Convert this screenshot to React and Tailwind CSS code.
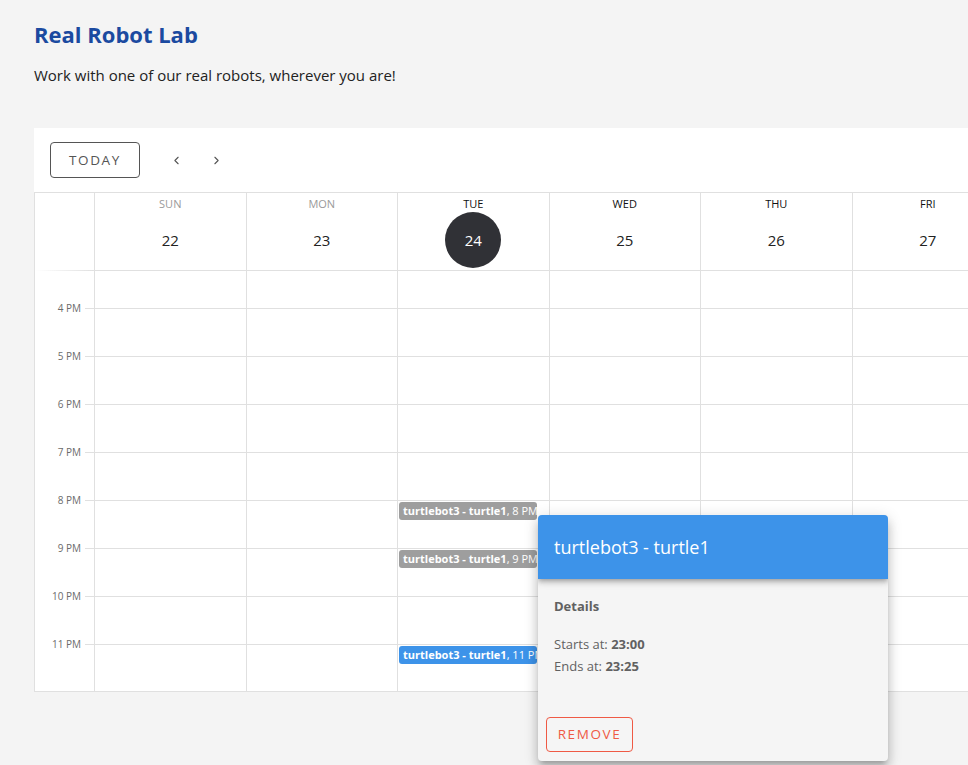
import React from "react";
import { ChevronLeft, ChevronRight } from "lucide-react";

const days = [
  { name: "SUN", date: 22, past: true },
  { name: "MON", date: 23, past: true },
  { name: "TUE", date: 24, today: true },
  { name: "WED", date: 25 },
  { name: "THU", date: 26 },
  { name: "FRI", date: 27 },
  { name: "SAT", date: 28 },
];

const hours = ["4 PM", "5 PM", "6 PM", "7 PM", "8 PM", "9 PM", "10 PM", "11 PM"];

const events = {
  "8 PM": { color: "bg-[#9e9e9e]", label: "8 PM - 8:25 PM" },
  "9 PM": { color: "bg-[#9e9e9e]", label: "9 PM - 9:25 PM" },
  "11 PM": { color: "bg-[#3d93e9]", label: "11 PM - 11:25 PM" },
};

const gridCols = "grid grid-cols-[59px_repeat(7,151.5px)]";

function Event({ ev }) {
  return (
    <div
      className={`${ev.color} mt-[1px] ml-[1px] mr-[12px] h-[18px] rounded-[3px] px-[4px] text-[11px] leading-[18px] text-white whitespace-nowrap overflow-hidden`}
    >
      <span className="font-bold">turtlebot3 - turtle1</span>, {ev.label}
    </div>
  );
}

export default function App() {
  return (
    <div
      className="relative w-[968px] h-[765px] overflow-hidden bg-[#f4f4f4] text-[#222]"
      style={{ fontFamily: '"Open Sans", "Liberation Sans", sans-serif' }}
    >
      <div className="pl-[34px] pt-[20px]">
        <h1 className="text-[22px] leading-[28px] font-bold text-[#1b4aa0]">Real Robot Lab</h1>
        <p className="mt-[17px] text-[15px] leading-[20px] text-[#222]">
          Work with one of our real robots, wherever you are!
        </p>

        <div className="mt-[43px] w-[1122px] bg-white">
          <div className="flex h-[64px] items-center pl-[16px]">
            <button className="h-[36px] w-[90px] rounded-[4px] border border-[#555] text-[13.5px] tracking-[1.6px] text-[#555]">
              TODAY
            </button>
            <div className="ml-[18px] flex items-center">
              <span className="flex h-[36px] w-[36px] items-center justify-center text-[#555]">
                <ChevronLeft size={13} strokeWidth={2} />
              </span>
              <span className="ml-[4px] flex h-[36px] w-[36px] items-center justify-center text-[#555]">
                <ChevronRight size={13} strokeWidth={2} />
              </span>
            </div>
          </div>

          <div className="border-l border-t border-b border-[#e0e0e0]">
            {/* header */}
            <div className={`${gridCols} h-[78px]`}>
              <div className="flex flex-col justify-end">
                <div className="h-[1px] bg-gradient-to-r from-white to-[#e0e0e0]" />
              </div>
              {days.map((d) => (
                <div
                  key={d.name}
                  className="flex flex-col items-center border-l border-b border-[#e0e0e0]"
                >
                  <div
                    className={`mt-[3px] text-[11px] leading-[16px] ${d.past ? "text-[#9a9a9a]" : "text-[#111]"}`}
                  >
                    {d.name}
                  </div>
                  <div
                    className={`flex h-[56px] w-[56px] items-center justify-center rounded-full text-[15px] ${
                      d.today ? "bg-[#303136] text-white" : "text-[#222]"
                    }`}
                  >
                    {d.date}
                  </div>
                </div>
              ))}
            </div>

            {/* partial top row */}
            <div className={`${gridCols} h-[37px]`}>
              <div />
              {days.map((d) => (
                <div key={d.name} className="border-l border-[#e0e0e0]" />
              ))}
            </div>

            {hours.map((h, i) => (
              <div key={h} className={`${gridCols} ${i === hours.length - 1 ? "h-[47px]" : "h-[48px]"}`}>
                <div className="relative">
                  <div className="absolute left-[50px] top-0 h-[1px] w-[9px] bg-[#e0e0e0]" />
                  <div className="absolute right-[13px] top-[-8px] text-[10px] leading-[16px] text-[#6b6b6b]">
                    {h}
                  </div>
                </div>
                {days.map((d) => (
                  <div key={d.name} className="border-l border-t border-[#e0e0e0]">
                    {d.today && events[h] ? <Event ev={events[h]} /> : null}
                  </div>
                ))}
              </div>
            ))}
          </div>
        </div>
      </div>

      {/* popup */}
      <div className="absolute left-[538px] top-[515px] w-[350px] h-[246px] overflow-hidden rounded-[4px] bg-[#f5f5f5] shadow-[0_5px_5px_-3px_rgba(0,0,0,0.2),0_8px_10px_1px_rgba(0,0,0,0.14),0_3px_14px_2px_rgba(0,0,0,0.12)] flex flex-col">
        <div className="relative z-10 flex h-[64px] items-center bg-[#3d93e9] px-[16px] shadow-[0_2px_4px_-1px_rgba(0,0,0,0.2),0_4px_5px_0_rgba(0,0,0,0.14),0_1px_10px_0_rgba(0,0,0,0.12)]">
          <div className="text-[18px] text-white">turtlebot3 - turtle1</div>
        </div>
        <div className="flex-1 px-[16px] pt-[16px] text-[13px] leading-[22px] text-[#616161]">
          <div className="font-bold">Details</div>
          <div className="mt-[16px]">
            Starts at: <span className="font-bold">23:00</span>
          </div>
          <div>
            Ends at: <span className="font-bold">23:25</span>
          </div>
        </div>
        <div className="p-[8px] pb-[9px]">
          <button className="h-[35px] w-[87px] rounded-[4px] border border-[#ef5a45] text-[13.5px] tracking-[1.6px] text-[#ef5a45]">
            REMOVE
          </button>
        </div>
      </div>
    </div>
  );
}
